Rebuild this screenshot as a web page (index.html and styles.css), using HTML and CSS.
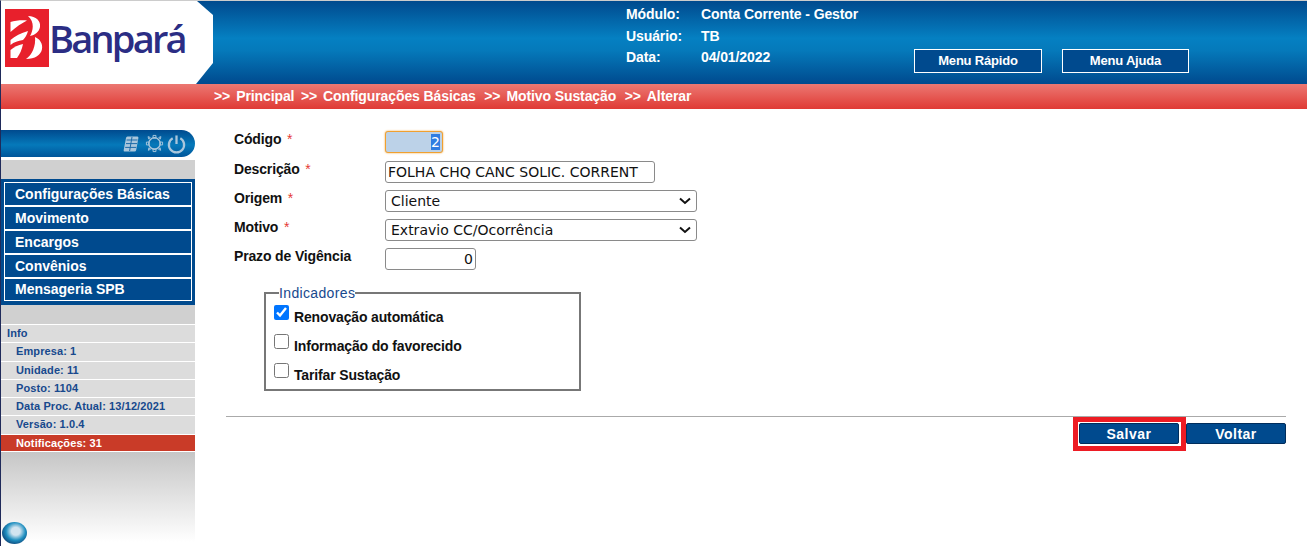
FILE: index.html
```html
<!DOCTYPE html>
<html lang="pt-BR">
<head>
  <meta charset="UTF-8">
  <title>Banpará - Conta Corrente</title>
  <link rel="stylesheet" href="styles.css">
</head>
<body>
<div class="page">
  <header class="top">
    <div class="logo">
      <svg class="logo-mark" width="44" height="58" viewBox="0 0 44 58">
        <rect width="44" height="58" fill="#e8202c"/>
        <g fill="#fff">
          <path d="M5.5 13 C10 11.5 17 11 22 11.5 C17 14 11 18 5.5 23 Z"/>
          <path d="M23 7 C31 7 36 12 35 18 C34 23 30 26 25 27 C28 22 30 13 23 7 Z"/>
          <path d="M30 28 C35 30 38 35 37 40 C36 46 30 50 21 50 C27 46 31 37 30 28 Z"/>
          <path d="M5.5 31 C10 27 16 24 23 22 C22 26 20 29 18 31 C13 32 9 33 5.5 36 Z"/>
          <path d="M5.5 41 C9 38 13 36 18 35 C17 40 15 45 12 49 H5.5 Z"/>
        </g>
      </svg>
      <span class="logo-text">Banpará</span>
    </div>
    <div class="session">
      <span class="session-key">Módulo:</span><span>Conta Corrente - Gestor</span>
      <span class="session-key">Usuário:</span><span>TB</span>
      <span class="session-key">Data:</span><span>04/01/2022</span>
    </div>
    <div class="top-buttons">
      <button class="top-btn" type="button">Menu Rápido</button>
      <button class="top-btn" type="button">Menu Ajuda</button>
    </div>
  </header>

  <nav class="crumb">
    <span>&gt;&gt;</span><a class="crumb-first">Principal</a>
    <span>&gt;&gt;</span><a>Configurações Básicas</a>
    <span>&gt;&gt;</span><a>Motivo Sustação</a>
    <span>&gt;&gt;</span><a>Alterar</a>
  </nav>

  <div class="content">
    <aside class="side">
      <div class="side-top">
        <!-- calculadora, engrenagem, desligar -->
        <svg width="16" height="16" viewBox="0 0 16 16" class="side-icon side-icon-calc">
          <path d="M4.5 0.5 H14.5 Q15.6 0.5 15.4 2 L13.2 14 Q13 15.5 11.5 15.5 H1.5 Q0.4 15.5 0.7 14 L3 2 Q3.2 0.5 4.5 0.5 Z" fill="#a9c6dc"/>
          <path d="M3.6 4 H14.6 M3 7.6 H14 M2.2 11.4 H13.2 M9 1 L6.6 15" stroke="#1c6ba8" stroke-width="1" fill="none"/>
        </svg>
        <svg width="19" height="19" viewBox="0 0 20 20" class="side-icon">
          <circle cx="10" cy="10" r="6" fill="none" stroke="#a9c6dc" stroke-width="1.5"/>
          <path d="M8.5 1.5 H11.5 V4.2 H8.5 Z M1.5 8.5 H4.2 V11.5 H1.5 Z M15.8 8.5 H18.5 V11.5 H15.8 Z M3.2 2.8 L5.4 3.6 L4 5.4 Z M16.8 2.8 L14.6 3.6 L16 5.4 Z M3.6 17.2 L4 14.6 L5.8 16 Z M16.4 17.2 L16 14.6 L14.2 16 Z M8.5 15.8 H11.5 V18.5 H8.5 Z" fill="none" stroke="#a9c6dc" stroke-width="1"/>
        </svg>
        <svg width="19" height="20" viewBox="0 0 20 20" class="side-icon">
          <path d="M6 4 A8 8 0 1 0 14 4" fill="none" stroke="#a9c6dc" stroke-width="2.4"/>
          <path d="M10 1 V10" stroke="#a9c6dc" stroke-width="2.4"/>
        </svg>
      </div>
      <div class="side-gap-a"></div>
      <div class="menu">
        <ul class="menu-list">
          <li>Configurações Básicas</li>
          <li>Movimento</li>
          <li>Encargos</li>
          <li>Convênios</li>
          <li>Mensageria SPB</li>
        </ul>
      </div>
      <div class="side-gap-b"></div>
      <ul class="info">
        <li class="info-title">Info</li>
        <li>Empresa: 1</li>
        <li>Unidade: 11</li>
        <li>Posto: 1104</li>
        <li>Data Proc. Atual: 13/12/2021</li>
        <li>Versão: 1.0.4</li>
        <li class="info-alert">Notificações: 31</li>
      </ul>
      <div class="side-bottom">
        <div class="globe"></div>
      </div>
    </aside>

    <main class="main">
      <form class="form">
        <div class="row row-first">
          <label class="lbl">Código <span class="req">*</span></label>
          <div class="fake-code"><span class="sel">2</span></div>
        </div>
        <div class="row">
          <label class="lbl">Descrição <span class="req">*</span></label>
          <input class="field field-desc" type="text" value="FOLHA CHQ CANC SOLIC. CORRENT">
        </div>
        <div class="row">
          <label class="lbl">Origem <span class="req">*</span></label>
          <select class="field field-sel"><option>Cliente</option></select>
        </div>
        <div class="row">
          <label class="lbl">Motivo <span class="req">*</span></label>
          <select class="field field-sel"><option>Extravio CC/Ocorrência</option></select>
        </div>
        <div class="row">
          <label class="lbl">Prazo de Vigência</label>
          <input class="field field-num" type="text" value="0">
        </div>

        <fieldset class="box">
          <legend class="box-title">Indicadores</legend>
          <label class="check"><input type="checkbox" checked> Renovação automática</label>
          <label class="check"><input type="checkbox"> Informação do favorecido</label>
          <label class="check"><input type="checkbox"> Tarifar Sustação</label>
        </fieldset>
      </form>

      <div class="actions">
        <div class="marked">
          <button class="btn" type="button">Salvar</button>
        </div>
        <button class="btn btn-back" type="button">Voltar</button>
      </div>
    </main>
  </div>
</div>
</body>
</html>
```

FILE: styles.css
```css
* {
  box-sizing: border-box;
}

body {
  margin: 0;
  background: #fff;
  font-family: "Liberation Sans", Arial, sans-serif;
  font-size: 14px;
}

.page {
  height: 546px;
  border-top: 1px solid #ccc;
  border-left: 1px solid #1f2a5a;
}

/* topo */
.top {
  display: flex;
  height: 83px;
  background: linear-gradient(#004a8e 0%, #0580c2 45%, #0579ba 60%, #004a8e 100%);
  color: #fff;
  font-weight: bold;
}

.logo {
  display: flex;
  align-items: center;
  width: 212px;
  height: 83px;
  padding: 0 0 9px 4px;
  background: #fff;
  clip-path: polygon(0 0, 196px 0, 212px 14px, 212px 62px, 195px 83px, 0 83px);
}

.logo-text {
  color: #2b2d84;
  font-family: "Open Sans", sans-serif;
  font-size: 38px;
  font-weight: 600;
  letter-spacing: -2.8px;
}

.session {
  display: grid;
  grid-template-columns: 75px auto;
  grid-auto-rows: 21.5px;
  align-content: start;
  margin: 3px 0 0 413px;
  letter-spacing: -0.1px;
  line-height: 21px;
}

.top-buttons {
  display: flex;
  gap: 20px;
  margin: 48px 0 0 56px;
}

.top-btn {
  width: 127.5px;
  height: 24px;
  padding-bottom: 3px;
  border: 1px solid #fff;
  background: #004a8e;
  color: #fff;
  font: bold 13px "Liberation Sans", Arial, sans-serif;
  letter-spacing: -0.2px;
}

.crumb {
  display: flex;
  height: 25px;
  padding-left: 213px;
  background: linear-gradient(#ec7872, #df3a35);
  color: #fff;
  font-weight: bold;
  letter-spacing: -0.1px;
  line-height: 25px;
}

.crumb span {
  margin-right: 6px;
}

.crumb a {
  margin-right: 8.5px;
}

.crumb .crumb-first {
  margin-right: 6.5px;
}

.content {
  display: flex;
}

/* menu lateral */
.side {
  flex: none;
  width: 194px;
  margin-top: 21px;
}

.side-top {
  display: flex;
  align-items: center;
  justify-content: flex-end;
  gap: 3px;
  height: 27px;
  padding-right: 9px;
  border-radius: 0 14px 14px 0;
  background: linear-gradient(#004a8e, #0579ba 55%, #00559a);
}

.side-icon-calc {
  margin-right: 3px;
}

.side-gap-a {
  height: 19px;
  margin-top: 3px;
  background: #d0d0d0;
}

.menu {
  height: 126px;
  padding: 3px;
  background: #004a8e;
}

.menu-list {
  height: 119px;
  margin: 0;
  padding: 0;
  border: 1px solid #fff;
  list-style: none;
  color: #fff;
  font-weight: bold;
}

.menu-list li {
  height: 24px;
  padding-left: 10px;
  border-bottom: 2px solid #fff;
  line-height: 22px;
}

.menu-list li:last-child {
  height: 21px;
  border-bottom: 0;
  line-height: 20px;
}

.side-gap-b {
  height: 19px;
  background: #d0d0d0;
}

.info {
  margin: 0;
  padding: 0;
  list-style: none;
  color: #17498d;
  font-size: 11px;
  font-weight: bold;
  letter-spacing: 0.1px;
}

.info li {
  height: 18.3px;
  padding-left: 15px;
  border-top: 1px solid #fff;
  background: #dcdcdc;
  line-height: 17px;
}

.info .info-title {
  padding-left: 6px;
}

.info .info-alert {
  border-bottom: 1px solid #fff;
  background: #c93b28;
  color: #fff;
}

.side-bottom {
  display: flex;
  align-items: flex-end;
  height: 90px;
  padding: 0 0 0 1px;
  background: linear-gradient(#c6c6c6, #fff);
}

.globe {
  width: 25px;
  height: 22px;
  margin-bottom: -2px;
  border-radius: 50%;
  background: radial-gradient(ellipse at 55% 42%, #d2e4f0 0 22%, #1f8fc0 50%, #0b3a6e 80%);
}

/* formulario */
.main {
  flex: 1;
  padding: 22px 21px 0 31px;
}

.form {
  padding-left: 8px;
}

.row {
  display: flex;
  align-items: flex-start;
  height: 29px;
}

.row-first {
  height: 30px;
}

.lbl {
  flex: none;
  width: 151px;
  margin-top: -1px;
  color: #111;
  font-weight: bold;
  letter-spacing: -0.15px;
  line-height: 18px;
}

.req {
  margin-left: 2px;
  color: #e53935;
  font-weight: normal;
}

.fake-code {
  display: flex;
  justify-content: flex-end;
  width: 58px;
  height: 22px;
  padding: 2px 2px;
  border: 1px solid #f0a030;
  border-radius: 3px;
  box-shadow: 0 0 2px #f0a030;
  background: #bcd2e8;
  font: 14px/16px "DejaVu Sans", sans-serif;
}

.sel {
  background: #2f7de1;
  color: #fff;
}

.field {
  height: 22px;
  padding: 0 2px;
  border: 1px solid #8a8a8a;
  border-radius: 3px;
  background: #fff;
  color: #111;
  font: 14px "DejaVu Sans", sans-serif;
}

.field-desc {
  width: 270px;
}

.field-sel {
  width: 312px;
  padding-left: 5px;
  appearance: none;
  background: #fff url("data:image/svg+xml,%3Csvg xmlns='http://www.w3.org/2000/svg' width='14' height='8' viewBox='0 0 14 8'%3E%3Cpath d='M2 1.5 L7 6 L12 1.5' fill='none' stroke='%23111' stroke-width='2'/%3E%3C/svg%3E") no-repeat right 4px center;
}

.field-num {
  width: 91px;
  text-align: right;
}

.box {
  width: 317px;
  height: 105px;
  margin: 9px 0 0 30px;
  padding: 0 0 0 8px;
  border: 2px solid #777;
}

.box-title {
  margin-left: 5px;
  padding: 0;
  color: #17498d;
  font-size: 14px;
  letter-spacing: 0.35px;
  line-height: 14px;
}

.check {
  display: flex;
  align-items: center;
  gap: 5px;
  height: 29px;
  padding-top: 4px;
  color: #111;
  font-weight: bold;
  letter-spacing: -0.15px;
}

.check input {
  width: 15px;
  height: 15px;
  margin: -8px 0 0;
}

.actions {
  display: flex;
  justify-content: flex-end;
  align-items: flex-start;
  height: 36px;
  margin-top: 25px;
  border-top: 1px solid #aaa;
}

.marked {
  padding: 1px 2px 2px 1px;
  border: 5px solid #ed1c24;
}

.btn {
  display: block;
  width: 100px;
  height: 21px;
  border: 1px solid #002d5c;
  border-radius: 2px;
  background: #004a8e;
  color: #fff;
  font: bold 14px "Liberation Sans", Arial, sans-serif;
  letter-spacing: 0.5px;
}

.btn-back {
  margin-top: 6px;
}
```
